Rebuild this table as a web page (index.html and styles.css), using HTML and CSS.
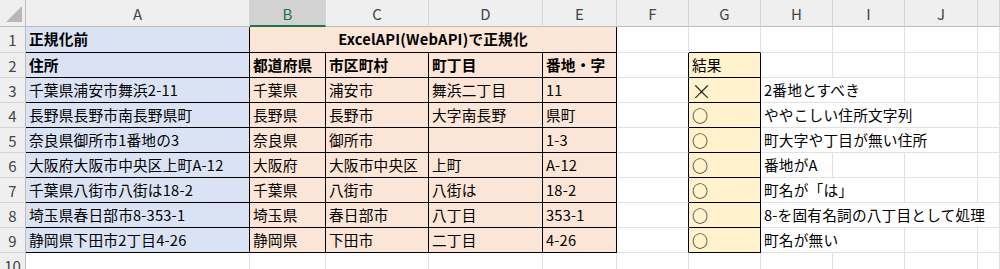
FILE: index.html
```html
<!DOCTYPE html>
<html lang="ja">
<head>
<meta charset="utf-8">
<title>正規化</title>
<link rel="stylesheet" href="styles.css">
</head>
<body>
<div class="sheet">
  <!-- header row -->
  <div class="corner"><svg class="tri" width="18" height="18" viewBox="0 0 18 18"><polygon points="17,1 17,17 1,17" fill="#b7b7b7"/></svg></div>
  <div class="ch">A</div>
  <div class="ch sel">B</div>
  <div class="ch">C</div>
  <div class="ch">D</div>
  <div class="ch">E</div>
  <div class="ch">F</div>
  <div class="ch">G</div>
  <div class="ch">H</div>
  <div class="ch">I</div>
  <div class="ch">J</div>
  <div class="ch"></div>

  <!-- row 1 -->
  <div class="rh">1</div>
  <div class="c blue bold k">正規化前</div>
  <div class="c org bold k ctr span4">ExcelAPI(WebAPI)で正規化</div>
  <div class="c"></div>
  <div class="c kb"></div>
  <div class="c"></div>
  <div class="c"></div>
  <div class="c"></div>
  <div class="c"></div>

  <!-- row 2 -->
  <div class="rh">2</div>
  <div class="c blue bold k">住所</div>
  <div class="c org bold k">都道府県</div>
  <div class="c org bold k">市区町村</div>
  <div class="c org bold k">町丁目</div>
  <div class="c org bold k">番地・字</div>
  <div class="c kr"></div>
  <div class="c yel k">結果</div>
  <div class="c"></div>
  <div class="c"></div>
  <div class="c"></div>
  <div class="c"></div>

  <!-- row 3 -->
  <div class="rh">3</div>
  <div class="c blue k">千葉県浦安市舞浜2-11</div>
  <div class="c org k">千葉県</div>
  <div class="c org k">浦安市</div>
  <div class="c org k">舞浜二丁目</div>
  <div class="c org k">11</div>
  <div class="c kr"></div>
  <div class="c yel k cross">×</div>
  <div class="c span2">2番地とすべき</div>
  <div class="c"></div>
  <div class="c"></div>

  <!-- row 4 -->
  <div class="rh">4</div>
  <div class="c blue k">長野県長野市南長野県町</div>
  <div class="c org k">長野県</div>
  <div class="c org k">長野市</div>
  <div class="c org k">大字南長野</div>
  <div class="c org k">県町</div>
  <div class="c kr"></div>
  <div class="c yel k mark">○</div>
  <div class="c span3">ややこしい住所文字列</div>
  <div class="c"></div>

  <!-- row 5 -->
  <div class="rh">5</div>
  <div class="c blue k">奈良県御所市1番地の3</div>
  <div class="c org k">奈良県</div>
  <div class="c org k">御所市</div>
  <div class="c org k"></div>
  <div class="c org k">1-3</div>
  <div class="c kr"></div>
  <div class="c yel k mark">○</div>
  <div class="c span3">町大字や丁目が無い住所</div>
  <div class="c"></div>

  <!-- row 6 -->
  <div class="rh">6</div>
  <div class="c blue k">大阪府大阪市中央区上町A-12</div>
  <div class="c org k">大阪府</div>
  <div class="c org k">大阪市中央区</div>
  <div class="c org k">上町</div>
  <div class="c org k">A-12</div>
  <div class="c kr"></div>
  <div class="c yel k mark">○</div>
  <div class="c">番地がA</div>
  <div class="c"></div>
  <div class="c"></div>
  <div class="c"></div>

  <!-- row 7 -->
  <div class="rh">7</div>
  <div class="c blue k">千葉県八街市八街は18-2</div>
  <div class="c org k">千葉県</div>
  <div class="c org k">八街市</div>
  <div class="c org k">八街は</div>
  <div class="c org k">18-2</div>
  <div class="c kr"></div>
  <div class="c yel k mark">○</div>
  <div class="c span2">町名が「は」</div>
  <div class="c"></div>
  <div class="c"></div>

  <!-- row 8 -->
  <div class="rh">8</div>
  <div class="c blue k">埼玉県春日部市8-353-1</div>
  <div class="c org k">埼玉県</div>
  <div class="c org k">春日部市</div>
  <div class="c org k">八丁目</div>
  <div class="c org k">353-1</div>
  <div class="c kr"></div>
  <div class="c yel k mark">○</div>
  <div class="c span4">8-を固有名詞の八丁目として処理</div>

  <!-- row 9 -->
  <div class="rh">9</div>
  <div class="c blue k">静岡県下田市2丁目4-26</div>
  <div class="c org k">静岡県</div>
  <div class="c org k">下田市</div>
  <div class="c org k">二丁目</div>
  <div class="c org k">4-26</div>
  <div class="c kr"></div>
  <div class="c yel k mark">○</div>
  <div class="c span2">町名が無い</div>
  <div class="c"></div>
  <div class="c"></div>

  <!-- row 10 -->
  <div class="rh">10</div>
  <div class="c"></div>
  <div class="c"></div>
  <div class="c"></div>
  <div class="c"></div>
  <div class="c"></div>
  <div class="c"></div>
  <div class="c"></div>
  <div class="c"></div>
  <div class="c"></div>
  <div class="c"></div>
  <div class="c"></div>
</div>
</body>
</html>
```

FILE: styles.css
```css
* { box-sizing: border-box; }
html, body { margin: 0; padding: 0; background: #ffffff; }
body { overflow: hidden; }

.sheet {
  display: grid;
  grid-template-columns: 26px 224px 76px 103px 114px 74px 72px 72px 72px 72px 73px 1fr;
  grid-template-rows: 27px 26px repeat(9, 25px);
  width: 1000px;
  font-family: "Noto Sans CJK JP", "Noto Sans", sans-serif;
  font-size: 14.67px;
  color: #000;
}

.corner {
  background: #efefef;
  border-right: 1px solid #bdbdbd;
  border-bottom: 1px solid #bdbdbd;
  display: flex;
  align-items: flex-end;
  justify-content: flex-end;
  padding: 0 2px 3px 0;
}
.tri { display: block; }

.ch {
  background: #efefef;
  border-right: 1px solid #d4d4d4;
  border-bottom: 1px solid #bdbdbd;
  display: flex;
  align-items: center;
  justify-content: center;
  color: #444;
  font-size: 15px;
  padding-top: 1px;
}
.ch.sel {
  background: #d2d2d2;
  color: #217346;
  border-bottom: 2px solid #217346;
}

.rh {
  background: #efefef;
  border-right: 1px solid #bdbdbd;
  border-bottom: 1px solid #d4d4d4;
  display: flex;
  align-items: center;
  justify-content: center;
  color: #444;
  font-size: 15px;
}

.c {
  border-right: 1px solid #e1e1e1;
  border-bottom: 1px solid #e1e1e1;
  display: flex;
  align-items: center;
  padding: 0 3px;
  white-space: nowrap;
  line-height: 1;
  letter-spacing: 0.2px;
  overflow: visible;
}
.k { border-right-color: #000; border-bottom-color: #000; }
.kr { border-right-color: #000; }
.kb { border-bottom-color: #000; }

.blue { background: #dae3f3; }
.org { background: #fbe5d6; }
.yel { background: #fff2cc; }
.bold { font-weight: 700; }
.ctr { justify-content: center; }
.mark { font-size: 16px; }
.cross { font-size: 21px; font-weight: 300; padding-left: 2px; }

.span2 { grid-column: span 2; }
.span3 { grid-column: span 3; }
.span4 { grid-column: span 4; }
```
